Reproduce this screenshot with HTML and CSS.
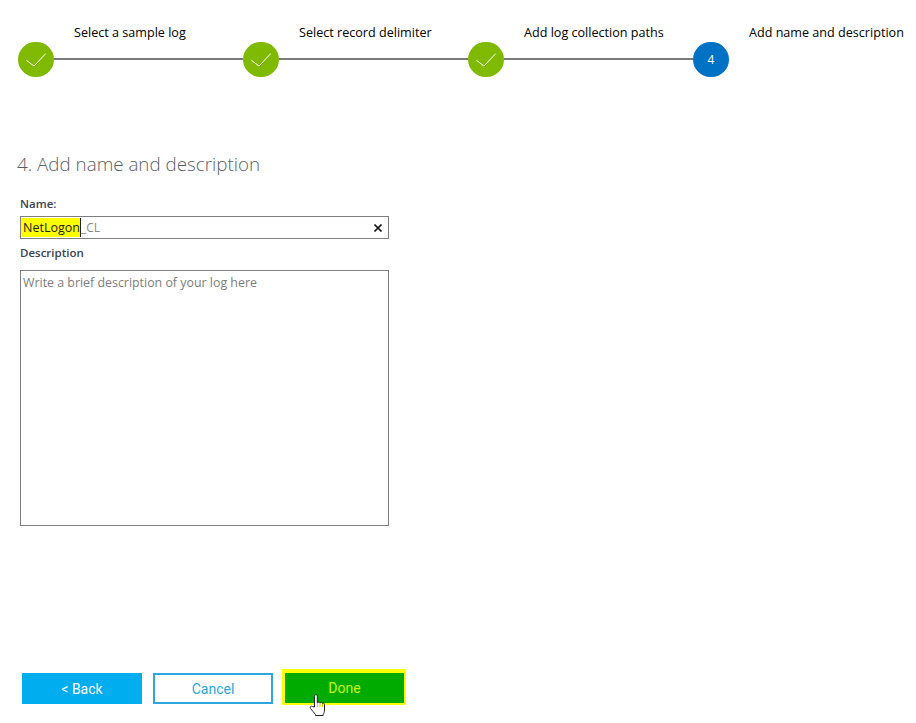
FILE: index.html
```html
<!DOCTYPE html>
<html lang="en">
<head>
    <meta charset="UTF-8">
    <meta name="viewport" content="width=device-width, initial-scale=1.0">
    <title>Add name and description</title>
    <link rel="stylesheet" href="styles.css">
</head>
<body>

<ol class="stepper">
    <li class="step">
        <span class="step-label">Select a sample log</span>
        <div class="step-track">
            <span class="circle done"><svg viewBox="0 0 35 35" width="35" height="35"><path d="M8.400 18.300L16 24L27.700 11.600" fill="none" stroke="#fff" stroke-width="1"/></svg></span>
            <span class="line"></span>
        </div>
    </li>
    <li class="step">
        <span class="step-label">Select record delimiter</span>
        <div class="step-track">
            <span class="circle done"><svg viewBox="0 0 35 35" width="35" height="35"><path d="M8.400 18.300L16 24L27.700 11.600" fill="none" stroke="#fff" stroke-width="1"/></svg></span>
            <span class="line"></span>
        </div>
    </li>
    <li class="step">
        <span class="step-label">Add log collection paths</span>
        <div class="step-track">
            <span class="circle done"><svg viewBox="0 0 35 35" width="35" height="35"><path d="M8.400 18.300L16 24L27.700 11.600" fill="none" stroke="#fff" stroke-width="1"/></svg></span>
            <span class="line"></span>
        </div>
    </li>
    <li class="step last">
        <span class="step-label">Add name and description</span>
        <div class="step-track">
            <span class="circle current">4</span>
        </div>
    </li>
</ol>

<h2 class="title">4. Add name and description</h2>

<form class="log-form">
    <label class="field-label">Name:</label>
    <div class="name-box">
        <span class="name-value">NetLogon</span><span class="name-suffix">_CL</span>
        <span class="clear">
            <svg viewBox="0 0 10 10" width="10" height="10"><path d="M1.500 1.500l7 7M8.500 1.500l-7 7" stroke="#111" stroke-width="1.700" fill="none"/></svg>
        </span>
    </div>
    <label class="field-label desc-label">Description</label>
    <div class="desc-box">Write a brief description of your log here</div>
</form>

<div class="actions">
    <button type="button" class="btn btn-back">&lt; Back</button>
    <button type="button" class="btn btn-cancel">Cancel</button>
    <button type="button" class="btn btn-done">Done
        <svg class="hand" viewBox="0 0 20 26" width="20" height="26">
            <path d="M6.500 14V3.200c0-2 2.800-2 2.800 0V10l.4-.4c.8-.8 2-.6 2.300.3.700-.7 2-.5 2.300.5.800-.6 2.200-.2 2.200 1.100v5.500c0 2-.6 3.200-1.300 4.500v1H7.500v-1C6 19.500 4 17.500 2.500 15.500c-1-1.500.7-3 2-2z" fill="#fff" stroke="#222" stroke-width="1"/>
            <path d="M9.500 10v4M12 10v4M14.500 11v3" stroke="#e8c800" stroke-width="1" fill="none"/>
        </svg>
    </button>
</div>

</body>
</html>
```

FILE: styles.css
```css
body {
    font-family: "Open Sans", "Noto Sans", sans-serif;
    background: #fff;
    color: #000;
    margin: 0;
    height: 723px;
    overflow: hidden;
}

/* wizard steps */
.stepper {
    list-style: none;
    display: flex;
    margin: 0;
    padding: 24px 0 0 18.3px;
}

.step {
    width: 225px;
    flex: none;
}

.step.last {
    width: 205px;
}

.step-label {
    display: block;
    margin-left: 55.7px;
    height: 17.7px;
    font-size: 12.6px;
    line-height: 17px;
    white-space: nowrap;
}

.step-track {
    display: flex;
    align-items: center;
}

.circle {
    width: 35.4px;
    height: 35.4px;
    border-radius: 50%;
    flex: none;
    display: flex;
    align-items: center;
    justify-content: center;
    color: #fff;
    font-size: 12px;
}

.circle.done {
    background: #7fba00;
}

.circle.current {
    background: #0072c6;
}

.line {
    flex: 1;
    height: 2px;
    background: #7a7a7a;
}

/* form */
.title {
    margin: 74px 0 0 17px;
    font-size: 18.8px;
    font-weight: 300;
    line-height: 26px;
    color: #5a5f66;
}

.log-form {
    margin: 19px 0 0 20px;
    width: 369px;
}

.field-label {
    display: block;
    font-size: 11.5px;
    font-weight: 600;
    line-height: 16px;
    color: #3c4350;
}

.name-box {
    display: flex;
    align-items: center;
    height: 23px;
    margin-top: 4px;
    padding: 0 5px 0 0;
    border: 1px solid #7f7f7f;
    box-sizing: border-box;
    font-size: 12.5px;
}

.name-value {
    background: #ffff00;
    color: #222;
    height: 19px;
    padding-left: 2px;
    line-height: 20px;
    border-right: 1px solid #222;
}

.name-suffix {
    color: #8a8a8a;
    font-size: 12px;
}

.clear {
    margin-left: auto;
    display: flex;
}

.desc-label {
    margin-top: 6px;
}

.desc-box {
    height: 256px;
    margin-top: 9px;
    padding: 3px 2px;
    border: 1px solid #7f7f7f;
    box-sizing: border-box;
    font-size: 12.4px;
    line-height: 17px;
    color: #7d7d7d;
}

/* bottom buttons */
.actions {
    display: flex;
    align-items: flex-start;
    margin: 143px 0 0 22px;
    gap: 11px;
}

.btn {
    width: 120px;
    height: 31px;
    margin-top: 4px;
    box-sizing: border-box;
    border: none;
    padding: 0;
    font-family: Roboto, "Liberation Sans", sans-serif;
    font-size: 14px;
}

.btn-back {
    background: #00adef;
    color: #fff;
}

.btn-cancel {
    background: #fff;
    color: #2ea6de;
    border: 2px solid #2ea6de;
}

.btn-done {
    position: relative;
    width: 124px;
    height: 36px;
    margin: 0 0 0 -2px;
    background: #00ab00;
    color: #c6f500;
    border: solid #ffff00;
    border-width: 4px 2px 2px 3px;
}

.hand {
    position: absolute;
    left: 23px;
    top: 20px;
}
```
